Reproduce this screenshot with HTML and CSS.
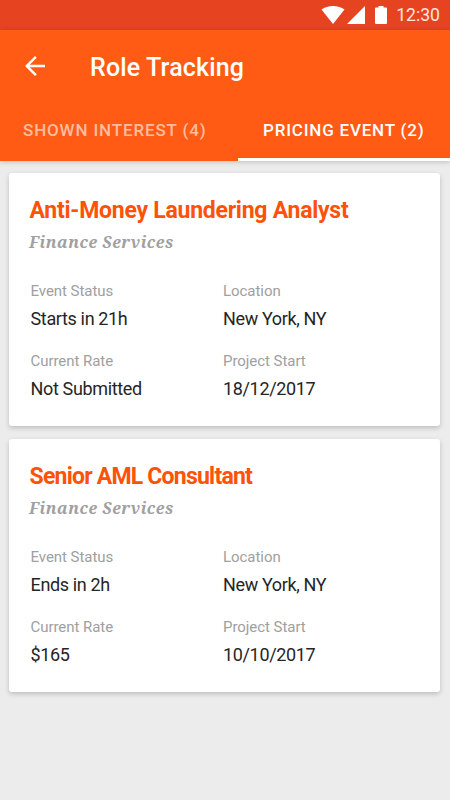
FILE: index.html
```html
<!doctype html>
<html lang="en">
  <head>
    <meta charset="utf-8">
    <title>Role Tracking</title>
    <link rel="stylesheet" href="styles.css">
  </head>

  <body>

    <div class="status-bar">
      <svg class="icon-wifi" width="24" height="18" viewBox="0 0 24 18">
        <path d="M12 18 L0.5 3.6 C3.6 1.3 7.6 0 12 0 s8.4 1.3 11.5 3.6 Z"/>
      </svg>
      <svg class="icon-signal" width="18" height="18" viewBox="0 0 18 18">
        <path d="M0 18 L18 0 V18 Z"/>
      </svg>
      <svg class="icon-battery" width="12" height="18" viewBox="0 0 12 18">
        <path d="M1 1.5 H3.5 V0 H8.5 V1.5 H11 Q12 1.5 12 2.5 V17 Q12 18 11 18 H1 Q0 18 0 17 V2.5 Q0 1.5 1 1.5 Z"/>
      </svg>
      <span class="clock">12:30</span>
    </div>

    <header class="app-bar">
      <div class="toolbar">
        <svg class="icon-back" width="30" height="30" viewBox="0 0 24 24">
          <path d="M20 11H7.83l5.59-5.59L12 4l-8 8 8 8 1.41-1.41L7.83 13H20v-2z"/>
        </svg>
        <h1>Role Tracking</h1>
      </div>
      <nav class="tabs">
        <a class="tab">SHOWN INTEREST (4)</a>
        <a class="tab active">PRICING EVENT (2)</a>
      </nav>
    </header>

    <main class="card-list">

      <section class="card">
        <h2 class="title-analyst">Anti-Money Laundering Analyst</h2>
        <p class="category">Finance Services</p>
        <dl class="details">
          <div><dt>Event Status</dt><dd>Starts in 21h</dd></div>
          <div><dt>Location</dt><dd>New York, NY</dd></div>
          <div><dt>Current Rate</dt><dd>Not Submitted</dd></div>
          <div><dt>Project Start</dt><dd>18/12/2017</dd></div>
        </dl>
      </section>

      <section class="card">
        <h2 class="title-consultant">Senior AML Consultant</h2>
        <p class="category">Finance Services</p>
        <dl class="details">
          <div><dt>Event Status</dt><dd>Ends in 2h</dd></div>
          <div><dt>Location</dt><dd>New York, NY</dd></div>
          <div><dt>Current Rate</dt><dd>$165</dd></div>
          <div><dt>Project Start</dt><dd>10/10/2017</dd></div>
        </dl>
      </section>

    </main>

  </body>
</html>
```

FILE: styles.css
```css
* {
  box-sizing: border-box;
}
body {
  margin: 0;
  min-height: 100vh;
  background-color: #ececec;
  font-family: Roboto, "Liberation Sans", sans-serif;
  overflow: hidden;
}
h1, h2, p, dl, dd {
  margin: 0;
}
svg {
  display: block;
  fill: #fff;
}
/* status bar */
.status-bar {
  display: flex;
  justify-content: flex-end;
  align-items: center;
  height: 30px;
  padding-right: 10px;
  background-color: #e64420;
  color: #fff;
}
.icon-signal {
  margin-left: 2px;
}
.icon-battery {
  margin-left: 10px;
}
.clock {
  margin-left: 9.5px;
  font-size: 17.6px;
  line-height: 30px;
  color: #ffe6df;
}
/* app bar */
.app-bar {
  height: 131px;
  background-color: #ff5b14;
  box-shadow: 0 1px 5px rgba(0, 0, 0, 0.2);
  color: #fff;
}
.toolbar {
  display: flex;
  align-items: center;
  height: 70px;
  padding: 4px 20px 0;
}
.icon-back {
  margin-top: -2px;
}
.toolbar h1 {
  margin-left: 40px;
  padding-top: 2px;
  font-size: 25px;
  font-weight: 500;
  line-height: 30px;
  letter-spacing: 0.15px;
}
.tabs {
  display: flex;
  height: 61px;
}
.tab {
  width: 238px;
  padding-left: 23px;
  font-size: 17px;
  font-weight: 500;
  line-height: 60px;
  letter-spacing: 0.85px;
  white-space: nowrap;
  color: rgba(255, 255, 255, 0.6);
}
.tab.active {
  width: 212px;
  padding-left: 25px;
  border-bottom: 3px solid #fff;
  letter-spacing: 0.8px;
  color: #fff;
}
/* cards */
.card-list {
  display: flex;
  flex-direction: column;
  gap: 13px;
  padding: 12px 10px 0 9px;
}
.card {
  height: 253px;
  padding: 23px 20px 0;
  border-radius: 3px;
  background-color: #fff;
  box-shadow: 0 2px 5px rgba(0, 0, 0, 0.2);
}
.card h2 {
  padding-left: 0.5px;
  font-size: 23px;
  font-weight: 700;
  line-height: 30px;
  color: #ff5209;
}
.title-analyst {
  letter-spacing: -0.25px;
}
.title-consultant {
  letter-spacing: -0.78px;
}
.category {
  margin-top: -1px;
  font-family: "Noto Serif", "DejaVu Serif", "Liberation Serif", serif;
  font-size: 16px;
  font-style: italic;
  font-weight: bold;
  line-height: 34px;
  letter-spacing: 0.55px;
  color: #a0a0a0;
}
.details {
  display: grid;
  grid-template-columns: 192.5px 1fr;
  grid-auto-rows: 70px;
  padding: 18px 0 0 1.5px;
}
.details dt {
  font-size: 15px;
  line-height: 28px;
  letter-spacing: -0.05px;
  color: #a0a0a0;
}
.details dd {
  font-size: 18px;
  line-height: 28px;
  letter-spacing: -0.35px;
  color: #252525;
}
```
